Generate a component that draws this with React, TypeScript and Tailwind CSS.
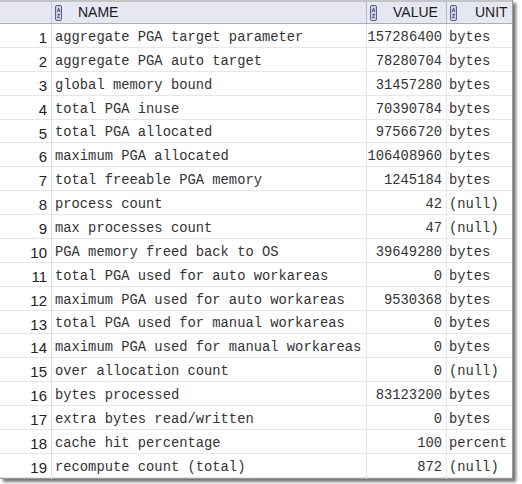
import React from "react";

const rows: [string, string, string][] = [
  ["aggregate PGA target parameter", "157286400", "bytes"],
  ["aggregate PGA auto target", "78280704", "bytes"],
  ["global memory bound", "31457280", "bytes"],
  ["total PGA inuse", "70390784", "bytes"],
  ["total PGA allocated", "97566720", "bytes"],
  ["maximum PGA allocated", "106408960", "bytes"],
  ["total freeable PGA memory", "1245184", "bytes"],
  ["process count", "42", "(null)"],
  ["max processes count", "47", "(null)"],
  ["PGA memory freed back to OS", "39649280", "bytes"],
  ["total PGA used for auto workareas", "0", "bytes"],
  ["maximum PGA used for auto workareas", "9530368", "bytes"],
  ["total PGA used for manual workareas", "0", "bytes"],
  ["maximum PGA used for manual workareas", "0", "bytes"],
  ["over allocation count", "0", "(null)"],
  ["bytes processed", "83123200", "bytes"],
  ["extra bytes read/written", "0", "bytes"],
  ["cache hit percentage", "100", "percent"],
  ["recompute count (total)", "872", "(null)"],
];

function SortIcon() {
  return (
    <svg width="7" height="16" viewBox="0 0 7 16" className="shrink-0">
      <rect x="0.5" y="0.5" width="6" height="15" rx="1.5" fill="#cdd0e6" stroke="#5b6085" />
      <text x="3.5" y="6.5" fontSize="5" textAnchor="middle" fill="#2c3050" fontFamily="Liberation Sans, sans-serif" fontWeight="bold">A</text>
      <text x="3.5" y="12.5" fontSize="5" textAnchor="middle" fill="#2c3050" fontFamily="Liberation Sans, sans-serif" fontWeight="bold">Z</text>
    </svg>
  );
}

const cols = "grid grid-cols-[52px_315px_80px_65px]";
const mono = { fontFamily: '"Liberation Mono", "Courier New", monospace' };
const sans = { fontFamily: '"Liberation Sans", Arial, sans-serif' };

export default function App() {
  return (
    <div className="w-[522px] h-[484px] bg-white overflow-hidden">
      <div className="w-[513px] border-r border-b border-[#9a9a9a] bg-white shadow-[3px_3px_3px_rgba(0,0,0,0.55)]">
        {/* header */}
        <div className={`${cols} h-[24px] border-t-2 border-[#c4c4c4] bg-[#e5e8f3] border-b border-b-[#a9adbb]`} style={sans}>
          <div className="border-r border-[#c9ccd8]" />
          {["NAME", "VALUE", "UNIT"].map((h, i) => (
            <div key={h} className={`flex items-center pl-[3px] ${i < 2 ? "border-r border-[#b5b9c9]" : ""}`}>
              <SortIcon />
              <span className={`text-[14px] text-[#1a1a1a] ${i === 2 ? "ml-[18px]" : "ml-[16px]"}`}>{h}</span>
            </div>
          ))}
        </div>
        {/* rows */}
        {rows.map(([name, value, unit], i) => (
          <div key={i} className={`${cols} h-[23.89px] border-b border-[#e4e7ef] text-[#333]`}>
            <div className="flex items-center justify-end pr-[4px] pt-[3px] border-r border-[#dde1eb] text-[15px] text-[#222]" style={sans}>
              {i + 1}
            </div>
            <div className="flex items-center pl-[3px] pt-[3px] border-r border-[#e4e7ef] text-[13.8px] whitespace-nowrap" style={mono}>
              {name}
            </div>
            <div className="flex items-center justify-end pr-[4px] pt-[3px] border-r border-[#e4e7ef] text-[13.8px]" style={mono}>
              {value}
            </div>
            <div className="flex items-center pl-[2px] pt-[3px] text-[13.8px]" style={mono}>
              {unit}
            </div>
          </div>
        ))}
      </div>
    </div>
  );
}
